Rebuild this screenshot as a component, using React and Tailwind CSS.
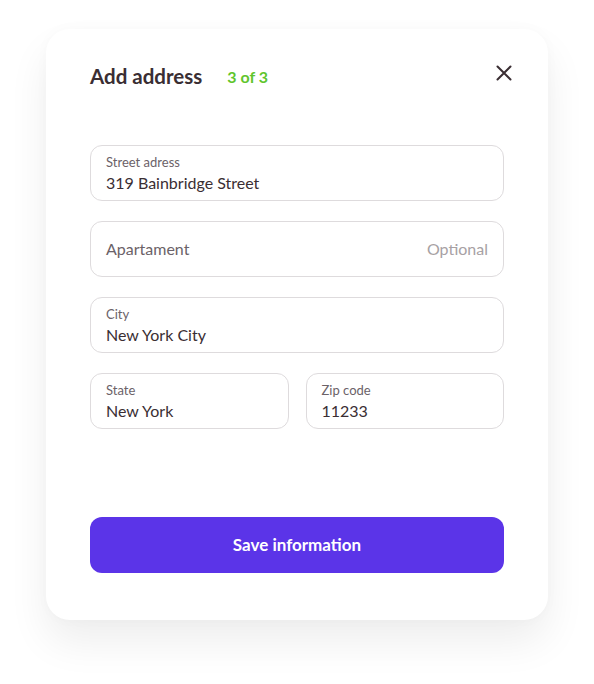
export default function App() {
  return (
    <div className="min-h-screen bg-white pt-[29px] pl-[46px] font-['Lato','Noto_Sans',sans-serif]">
      <div className="w-[502px] h-[591px] rounded-[24px] bg-white px-[44px] pt-[34px] shadow-[0_22px_40px_rgba(0,0,0,0.07),0_0_14px_rgba(0,0,0,0.025)] flex flex-col">
        <div className="flex items-center h-[26px]">
          <h1 className="text-[20.5px] font-bold text-[#3a2e33] leading-none">Add address</h1>
          <span className="ml-[25px] text-[16px] font-bold text-[#5fc52d] leading-none mt-[1px]">3 of 3</span>
          <button className="ml-auto mr-[-8px] mt-[-7px] text-[#3a2e33]">
            <svg width="16" height="16" viewBox="0 0 16 16" fill="none" stroke="currentColor" strokeWidth="2" strokeLinecap="round">
              <path d="M1.5 1.5L14.5 14.5M14.5 1.5L1.5 14.5" />
            </svg>
          </button>
        </div>

        <div className="mt-[56px] flex flex-col gap-[20px]">
          <Field label="Street adress" value="319 Bainbridge Street" />
          <div className="h-[56px] rounded-[12px] border border-[#dedbdd] px-[15px] flex items-center justify-between">
            <span className="text-[16px] text-[#6b6268]">Apartament</span>
            <span className="text-[16px] text-[#a7a1a4]">Optional</span>
          </div>
          <Field label="City" value="New York City" />
          <div className="grid grid-cols-2 gap-[17px]">
            <Field label="State" value="New York" />
            <Field label="Zip code" value="11233" />
          </div>
        </div>

        <button className="mt-[88px] h-[56px] rounded-[12px] bg-[#5b34e8] text-white text-[17px] font-bold">
          Save information
        </button>
      </div>
    </div>
  );
}

function Field({ label, value }) {
  return (
    <div className="h-[56px] rounded-[12px] border border-[#dedbdd] px-[15px] pt-[8px]">
      <div className="text-[13px] leading-[16px] text-[#6b6268]">{label}</div>
      <div className="mt-[3px] text-[16px] leading-[20px] text-[#3a2e33]">{value}</div>
    </div>
  );
}
